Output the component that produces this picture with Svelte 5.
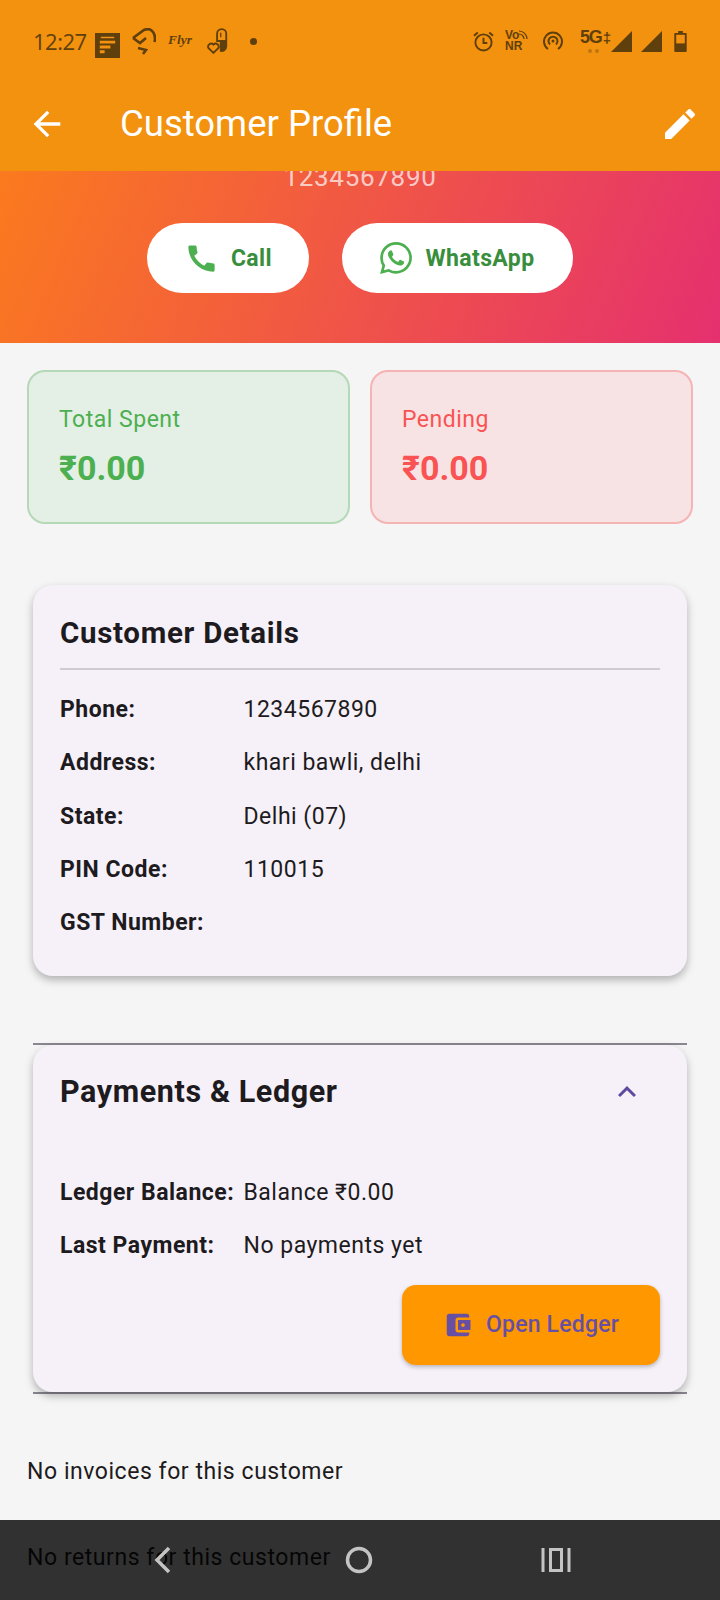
<script>
  const details = [
    { label: 'Phone:', value: '1234567890' },
    { label: 'Address:', value: 'khari bawli, delhi' },
    { label: 'State:', value: 'Delhi (07)' },
    { label: 'PIN Code:', value: '110015' },
    { label: 'GST Number:', value: '' }
  ];
  const ledger = [
    { label: 'Ledger Balance:', value: 'Balance ₹0.00' },
    { label: 'Last Payment:', value: 'No payments yet' }
  ];
</script>

<div class="screen">
  <header class="top">
    <div class="status">
      <span class="time">12:27</span>
      <svg class="first" width="25" height="25" viewBox="0 0 26 26">
        <rect width="26" height="26" fill="#5f3f0c" />
        <path d="M6 4h14v1.400H6zM5 8h16v3H5zM5 13h11v3H5zM5 18h5v3H5z" fill="#f39110" />
      </svg>
      <svg class="cloud" width="24" height="27" viewBox="0 0 24 27" fill="none" stroke="#5f3f0c" stroke-width="2.600">
        <path d="M1 10 12 2Q18-.5 21 4 24 8 22.500 14" />
        <path d="M1 10l7 5 6-5" />
        <path d="M6 20l8 2-3 4" />
      </svg>
      <span class="flyr">Flyr</span>
      <svg class="pill-ic" width="22" height="26" viewBox="0 0 24 28">
        <path d="M10 6a6 6 0 0 1 12 0v14a6 6 0 0 1-8 5.500V15h-4z" fill="#5f3f0c" />
        <path d="M12 13V6a4 4 0 0 1 8 0v7z" fill="#f39110" />
        <path d="M15 5v5" stroke="#5f3f0c" stroke-width="1.400" />
        <path d="M7 27 1.500 21.500a3.300 3.300 0 0 1 5.500-3.500 3.300 3.300 0 0 1 5.500 3.500z" fill="#f39110" stroke="#5f3f0c" stroke-width="2" />
      </svg>
      <span class="dot"></span>
      <span class="spacer"></span>
      <svg width="21" height="21" viewBox="0 0 22 22" fill="none" stroke="#5f3f0c" stroke-width="2">
        <circle cx="11" cy="12" r="8.500" />
        <path d="M11 7v5.500h4M1 5l4-3.500M21 5l-4-3.500" />
      </svg>
      <div class="vo"><span class="vo-top">Vo<svg width="9" height="9" viewBox="0 0 9 9" fill="none" stroke="#5f3f0c" stroke-width="1.200"><path d="M0 1a8 8 0 0 1 8 8M0 4a5 5 0 0 1 5 5" /></svg></span><span>NR</span></div>
      <svg class="hot" width="20" height="20" viewBox="0 0 20 20" fill="none" stroke="#5f3f0c" stroke-width="2">
        <path d="M5 18a9 9 0 1 1 10 0M7 13.500a4.500 4.500 0 1 1 6 0" />
        <circle cx="10" cy="10" r="1.500" fill="#5f3f0c" stroke="none" />
      </svg>
      <div class="five">5G<span>‡</span><i></i></div>
      <svg class="sig" width="21" height="21" viewBox="0 0 21 21"><path d="M21 0v21H0z" fill="#5f3f0c" /></svg>
      <svg class="sig2" width="21" height="21" viewBox="0 0 21 21"><path d="M21 0v21H0z" fill="#5f3f0c" /></svg>
      <svg class="bat" width="13" height="21" viewBox="0 0 13 22">
        <path d="M4 0h5v2h3a1 1 0 0 1 1 1v18a1 1 0 0 1-1 1H1a1 1 0 0 1-1-1V3a1 1 0 0 1 1-1h3z" fill="#5f3f0c" />
        <rect x="2" y="4" width="9" height="9" fill="#f39110" />
      </svg>
    </div>
    <div class="appbar">
      <svg width="40" height="40" viewBox="0 0 24 24" fill="#fff">
        <path d="M20 11H7.830l5.590-5.590L12 4l-8 8 8 8 1.410-1.410L7.830 13H20v-2z" />
      </svg>
      <h1>Customer Profile</h1>
      <svg width="40" height="40" viewBox="0 0 24 24" fill="#fff">
        <path d="M3 17.250V21h3.750L17.810 9.940l-3.750-3.750L3 17.250zM20.710 7.040c.39-.39.39-1.020 0-1.410l-2.340-2.340c-.39-.39-1.020-.39-1.410 0l-1.830 1.830 3.750 3.750 1.830-1.830z" />
      </svg>
    </div>
  </header>

  <section class="hero">
    <div class="phone">1234567890</div>
    <div class="actions">
      <button class="pill call">
        <svg width="35" height="35" viewBox="0 0 24 24" fill="#4caf50">
          <path d="M20.010 15.380c-1.230 0-2.420-.2-3.530-.56-.35-.12-.74-.03-1.010.24l-1.570 1.970c-2.830-1.350-5.480-3.900-6.890-6.830l1.950-1.660c.27-.28.35-.67.24-1.020-.37-1.110-.56-2.300-.56-3.530 0-.54-.45-.99-.99-.99H4.190C3.650 3 3 3.240 3 3.990 3 13.280 10.730 21 20.010 21c.71 0 .99-.63.99-1.180v-3.450c0-.54-.45-.99-.99-.99z" />
        </svg>
        Call
      </button>
      <button class="pill wa">
        <svg width="32" height="32" viewBox="0 0 24 24" fill="#4caf50">
          <path d="M17.472 14.382c-.297-.149-1.758-.867-2.030-.967-.273-.099-.471-.148-.67.150-.197.297-.767.966-.94 1.164-.173.199-.347.223-.644.075-.297-.150-1.255-.463-2.390-1.475-.883-.788-1.480-1.761-1.653-2.059-.173-.297-.018-.458.130-.606.134-.133.298-.347.446-.520.149-.174.198-.298.298-.497.099-.198.050-.371-.025-.520-.075-.149-.669-1.612-.916-2.207-.242-.579-.487-.5-.669-.510-.173-.008-.371-.010-.570-.010-.198 0-.520.074-.792.372-.272.297-1.040 1.016-1.040 2.479 0 1.462 1.065 2.875 1.213 3.074.149.198 2.096 3.200 5.077 4.487.709.306 1.262.489 1.694.625.712.227 1.360.195 1.871.118.571-.085 1.758-.719 2.006-1.413.248-.694.248-1.289.173-1.413-.074-.124-.272-.198-.570-.347m-5.421 7.403h-.004a9.870 9.870 0 01-5.031-1.378l-.361-.214-3.741.982.998-3.648-.235-.374a9.860 9.860 0 01-1.510-5.260c.001-5.450 4.436-9.884 9.888-9.884 2.640 0 5.122 1.030 6.988 2.898a9.825 9.825 0 012.893 6.994c-.003 5.450-4.437 9.884-9.885 9.884m8.413-18.297A11.815 11.815 0 0012.050 0C5.495 0 .16 5.335.157 11.892c0 2.096.547 4.142 1.588 5.945L.057 24l6.305-1.654a11.882 11.882 0 005.683 1.448h.005c6.554 0 11.890-5.335 11.893-11.893a11.821 11.821 0 00-3.480-8.413z" />
        </svg>
        WhatsApp
      </button>
    </div>
  </section>

  <section class="stats">
    <div class="stat green">
      <div class="stat-label">Total Spent</div>
      <div class="stat-value">₹0.00</div>
    </div>
    <div class="stat red">
      <div class="stat-label">Pending</div>
      <div class="stat-value">₹0.00</div>
    </div>
  </section>

  <section class="card details">
    <h2>Customer Details</h2>
    <div class="rule"></div>
    {#each details as row}
      <div class="row">
        <span class="key">{row.label}</span>
        <span class="val">{row.value}</span>
      </div>
    {/each}
  </section>

  <section class="expansion">
    <div class="card ledger">
      <div class="ledger-head">
        <h2 class="big">Payments &amp; Ledger</h2>
        <svg width="36" height="36" viewBox="0 0 24 24" fill="#5e4a9e">
          <path d="M12 8l-6 6 1.410 1.410L12 10.830l4.590 4.580L18 14z" />
        </svg>
      </div>
      {#each ledger as row}
        <div class="row">
          <span class="key">{row.label}</span>
          <span class="val">{row.value}</span>
        </div>
      {/each}
      <div class="ledger-foot">
        <button class="open">
          <svg width="30" height="30" viewBox="0 0 24 24" fill="#6750a4">
            <path d="M21 18v1c0 1.100-.9 2-2 2H5c-1.110 0-2-.9-2-2V5c0-1.100.89-2 2-2h14c1.100 0 2 .9 2 2v1h-9c-1.110 0-2 .9-2 2v8c0 1.100.89 2 2 2h9zm-9-2h10V8H12v8zm4-2.500c-.83 0-1.500-.67-1.500-1.500s.67-1.500 1.500-1.500 1.500.67 1.500 1.500-.67 1.500-1.500 1.500z" />
          </svg>
          Open Ledger
        </button>
      </div>
    </div>
  </section>

  <p class="empty first">No invoices for this customer</p>
  <p class="empty">No returns for this customer</p>

  <nav class="navbar">
    <svg width="24" height="30" viewBox="0 0 24 30" fill="none" stroke="#c4c4c4" stroke-width="3.500">
      <path d="M17 3 5 15l12 12" />
    </svg>
    <svg width="30" height="30" viewBox="0 0 30 30" fill="none" stroke="#c4c4c4" stroke-width="3.500">
      <circle cx="15" cy="15" r="11.500" />
    </svg>
    <svg width="30" height="26" viewBox="0 0 30 26" fill="none" stroke="#c4c4c4" stroke-width="3">
      <path d="M2 1v24M28 1v24" />
      <rect x="9.500" y="2.500" width="11" height="21" />
    </svg>
  </nav>
</div>

<style>
  :global(body) {
    margin: 0;
    background: #f5f5f5;
    font-family: Roboto, "Liberation Sans", sans-serif;
  }

  .screen {
    position: relative;
    width: 720px;
    height: 1600px;
    overflow: hidden;
    background: #f5f5f5;
    color: #1d1b20;
  }

  .top {
    height: 171px;
    background: #f3920e;
    position: relative;
    z-index: 2;
  }

  .status {
    height: 82px;
    padding: 0 33px;
    box-sizing: border-box;
    display: flex;
    align-items: center;
    color: #5f3f0c;
  }

  .status svg {
    flex: none;
  }

  .time {
    font-family: "Open Sans", sans-serif;
    font-size: 22px;
    letter-spacing: -0.5px;
    width: 52px;
    flex: none;
  }

  .first {
    margin-left: 10px;
  }

  .cloud {
    margin-left: 12px;
  }

  .flyr {
    font-family: "Liberation Serif", serif;
    font-style: italic;
    font-weight: 700;
    font-size: 13.500px;
    width: 25px;
    margin: 0 0 2px 12px;
  }

  .pill-ic {
    margin-left: 14px;
  }

  .dot {
    width: 7px;
    height: 7px;
    border-radius: 50%;
    background: #5f3f0c;
    margin-left: 21px;
  }

  .spacer {
    flex: 1;
  }

  .vo {
    display: flex;
    flex-direction: column;
    width: 22px;
    font-family: "Liberation Sans", sans-serif;
    font-weight: 700;
    font-size: 12px;
    line-height: 11px;
    margin-left: 11px;
  }

  .vo-top {
    white-space: nowrap;
  }

  .hot {
    margin-left: 16px;
  }

  .five {
    position: relative;
    width: 27px;
    font-family: "Liberation Sans", sans-serif;
    font-weight: 700;
    font-size: 18px;
    letter-spacing: -1.200px;
    white-space: nowrap;
    margin: 0 0 8px 17px;
  }

  .five span {
    font-size: 15px;
    margin-left: 1px;
  }

  .five i {
    position: absolute;
    left: 8px;
    bottom: -5px;
    width: 4px;
    height: 4px;
    border-radius: 50%;
    background: rgba(95, 63, 12, 0.35);
    box-shadow: 7px 0 rgba(95, 63, 12, 0.35);
  }

  .sig {
    margin-left: 4px;
  }

  .sig2 {
    margin-left: 9px;
  }

  .bat {
    margin-left: 12px;
  }

  .appbar {
    height: 83px;
    display: flex;
    align-items: center;
    padding: 0 20px 0 27px;
    color: #fff;
  }

  h1 {
    margin: 0 0 0 53px;
    font-size: 36.500px;
    font-weight: 400;
    flex: 1;
  }

  .hero {
    height: 172px;
    box-sizing: border-box;
    background: linear-gradient(112deg, #fb7a1e 0%, #e5306f 100%);
    overflow: hidden;
    display: flex;
    flex-direction: column;
    justify-content: flex-end;
    align-items: center;
    padding-bottom: 50px;
  }

  .phone {
    color: rgba(255, 255, 255, 0.7);
    font-size: 26px;
    letter-spacing: 0.7px;
    line-height: 28px;
    margin-bottom: 32px;
  }

  .actions {
    display: flex;
    gap: 33px;
  }

  .pill {
    height: 70px;
    border: 0;
    border-radius: 35px;
    background: #fff;
    color: #388e3c;
    font: 700 23px Roboto, sans-serif;
    letter-spacing: 0.4px;
    display: flex;
    align-items: center;
    justify-content: center;
    padding: 0;
  }

  .call {
    width: 162px;
    gap: 12px;
  }

  .wa {
    width: 231px;
    gap: 13px;
  }

  .stats {
    display: grid;
    grid-template-columns: 323px 323px;
    gap: 20px;
    padding: 27px 27px 0;
  }

  .stat {
    height: 154px;
    box-sizing: border-box;
    border-radius: 18px;
    padding: 34px 30px 0;
  }

  .green {
    background: #e4efe5;
    border: 2px solid #b5d8b6;
    color: #4caf50;
  }

  .red {
    background: #f7e3e4;
    border: 2px solid #f5b3b3;
    color: #f95353;
  }

  .stat-label {
    font-size: 23px;
    line-height: 28px;
    letter-spacing: 0.5px;
  }

  .stat-value {
    font-size: 34px;
    font-weight: 700;
    line-height: 40px;
    margin-top: 14px;
  }

  .card {
    background: #f6f1f9;
    border-radius: 20px;
    box-shadow: 0 4px 8px rgba(0, 0, 0, 0.28);
  }

  .details {
    margin: 61px 33px 0;
    height: 391px;
    box-sizing: border-box;
    padding: 31px 27px 0;
  }

  h2 {
    margin: 0;
    font-size: 29.500px;
    font-weight: 700;
    letter-spacing: 0.7px;
    line-height: 34px;
  }

  .big {
    font-size: 30.500px;
    letter-spacing: 0.6px;
  }

  .rule {
    height: 2px;
    background: #cfcbd3;
    margin: 18px 0 24px;
  }

  .row {
    display: flex;
    min-height: 53.300px;
    font-size: 23px;
    line-height: 31px;
  }

  .key {
    width: 183.500px;
    flex: none;
    font-weight: 700;
    letter-spacing: 0.5px;
  }

  .val {
    letter-spacing: 0.5px;
  }

  .expansion {
    margin: 67px 33px 0;
    border-top: 2px solid #8b8791;
    border-bottom: 2px solid #8b8791;
  }

  .ledger {
    height: 347px;
    box-sizing: border-box;
    padding: 0 27px;
  }

  .ledger-head {
    height: 94px;
    display: flex;
    align-items: center;
    justify-content: space-between;
    padding-right: 15px;
    margin-bottom: 38px;
  }

  .ledger-foot {
    display: flex;
    justify-content: flex-end;
    margin-top: 1px;
  }

  .open {
    width: 258px;
    height: 80px;
    border: 0;
    border-radius: 14px;
    background: #ff9800;
    color: #6750a4;
    font: 500 23px Roboto, sans-serif;
    letter-spacing: 0.2px;
    display: flex;
    align-items: center;
    justify-content: center;
    gap: 13px;
    box-shadow: 0 2px 4px rgba(0, 0, 0, 0.25);
    padding: 0;
  }

  .empty {
    margin: 0 0 0 27px;
    font-size: 23px;
    line-height: 32px;
    letter-spacing: 0.55px;
  }

  .first {
    margin-top: 62px;
    margin-bottom: 54px;
  }

  .navbar {
    position: absolute;
    left: 0;
    right: 0;
    bottom: 0;
    height: 80px;
    background: rgba(0, 0, 0, 0.8);
    display: flex;
    align-items: center;
    justify-content: space-between;
    padding: 0 149px 0 152px;
  }
</style>
